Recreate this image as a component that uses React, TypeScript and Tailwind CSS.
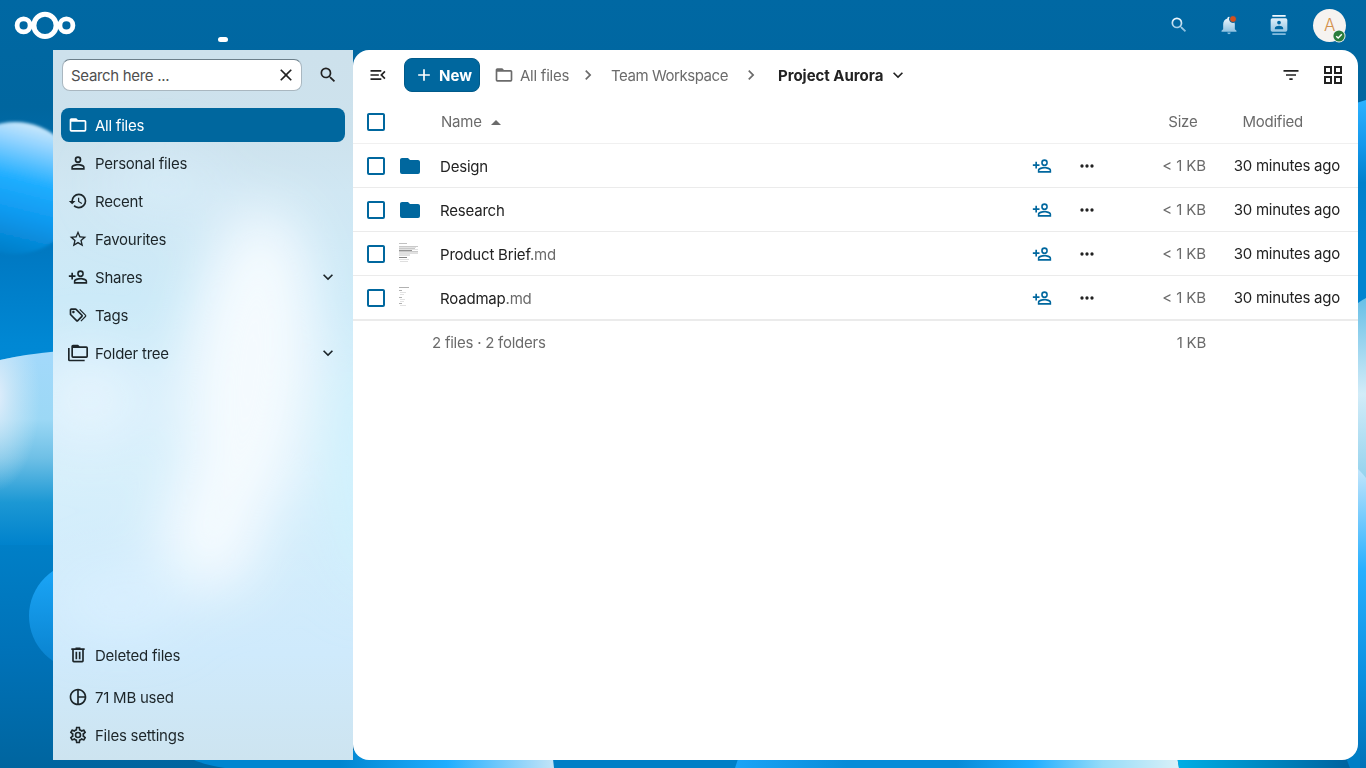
import React from "react";

const P = {
  magnify: "M9.5,3A6.5,6.5 0 0,1 16,9.5C16,11.11 15.41,12.59 14.44,13.73L14.71,14H15.5L20.5,19L19,20.5L14,15.5V14.71L13.73,14.44C12.59,15.41 11.11,16 9.5,16A6.5,6.5 0 0,1 3,9.5A6.5,6.5 0 0,1 9.5,3M9.5,5C7,5 5,7 5,9.5C5,12 7,14 9.5,14C12,14 14,12 14,9.5C14,7 12,5 9.5,5Z",
  close: "M19,6.41L17.59,5L12,10.59L6.41,5L5,6.41L10.59,12L5,17.59L6.41,19L12,13.41L17.59,19L19,17.59L13.41,12L19,6.41Z",
  folderOutline: "M20,18H4V8H20M20,6H12L10,4H4C2.89,4 2,4.89 2,6V18A2,2 0 0,0 4,20H20A2,2 0 0,0 22,18V8C22,6.89 21.1,6 20,6Z",
  folder: "M10,4H4C2.89,4 2,4.89 2,6V18A2,2 0 0,0 4,20H20A2,2 0 0,0 22,18V8C22,6.89 21.1,6 20,6H12L10,4Z",
  account: "M12,4A4,4 0 0,1 16,8A4,4 0 0,1 12,12A4,4 0 0,1 8,8A4,4 0 0,1 12,4M12,6A2,2 0 0,0 10,8A2,2 0 0,0 12,10A2,2 0 0,0 14,8A2,2 0 0,0 12,6M12,13C14.67,13 20,14.33 20,17V20H4V17C4,14.33 9.33,13 12,13M12,14.9C9.03,14.9 5.9,16.36 5.9,17V18.1H18.1V17C18.1,16.36 14.97,14.9 12,14.9Z",
  history: "M13.5,8H12V13L16.28,15.54L17,14.33L13.5,12.25V8M13,3A9,9 0 0,0 4,12H1L4.96,16.03L9,12H6A7,7 0 0,1 13,5A7,7 0 0,1 20,12A7,7 0 0,1 13,19C11.07,19 9.32,18.21 8.06,16.94L6.64,18.36C8.27,20 10.5,21 13,21A9,9 0 0,0 22,12A9,9 0 0,0 13,3",
  star: "M12,15.39L8.24,17.66L9.23,13.38L5.91,10.5L10.29,10.13L12,6.09L13.71,10.13L18.09,10.5L14.77,13.38L15.76,17.66M22,9.24L14.81,8.63L12,2L9.19,8.63L2,9.24L7.45,13.97L5.82,21L12,17.27L18.18,21L16.54,13.97L22,9.24Z",
  accountPlus: "M15,4A4,4 0 0,0 11,8A4,4 0 0,0 15,12A4,4 0 0,0 19,8A4,4 0 0,0 15,4M15,5.9C16.16,5.9 17.1,6.84 17.1,8C17.1,9.16 16.16,10.1 15,10.1A2.1,2.1 0 0,1 12.9,8A2.1,2.1 0 0,1 15,5.9M4,7V10H1V12H4V15H6V12H9V10H6V7H4M15,13C12.33,13 7,14.33 7,17V20H23V17C23,14.33 17.67,13 15,13M15,14.9C17.97,14.9 21.1,16.36 21.1,17V18.1H8.9V17C8.9,16.36 12,14.9 15,14.9Z",
  tags: "M6.5 10C7.3 10 8 9.3 8 8.5S7.3 7 6.5 7 5 7.7 5 8.5 5.7 10 6.5 10M9 6L16 13L11 18L4 11V6H9M9 4H4C2.9 4 2 4.9 2 6V11C2 11.6 2.2 12.1 2.6 12.4L9.6 19.4C9.9 19.8 10.4 20 11 20S12.1 19.8 12.4 19.4L17.4 14.4C17.8 14 18 13.5 18 13C18 12.4 17.8 11.9 17.4 11.6L10.4 4.6C10.1 4.2 9.6 4 9 4M13.5 5.7L14.5 4.7L21.4 11.6C21.8 12 22 12.5 22 13S21.8 14.1 21.4 14.4L16 19.8L15 18.8L20.7 13L13.5 5.7Z",
  folderMultiple: "M22 4H14L12 2H6A2 2 0 0 0 4 4V16A2 2 0 0 0 6 18H22A2 2 0 0 0 24 16V6A2 2 0 0 0 22 4M22 16H6V6H22V16M2 6H0V20A2 2 0 0 0 2 22H20V20H2Z",
  chevronDown: "M7.41,8.58L12,13.17L16.59,8.58L18,10L12,16L6,10L7.41,8.58Z",
  chevronRight: "M8.59,16.58L13.17,12L8.59,7.41L10,6L16,12L10,18L8.59,16.58Z",
  trash: "M9,3V4H4V6H5V19A2,2 0 0,0 7,21H17A2,2 0 0,0 19,19V6H20V4H15V3H9M7,6H17V19H7V6M9,8V17H11V8H9M13,8V17H15V8H13Z",
  pie: "M12 2C6.5 2 2 6.5 2 12S6.5 22 12 22 22 17.5 22 12 17.5 2 12 2M13 4.1C16.6 4.5 19.5 7.4 19.9 11H13V4.1M4 12C4 7.9 7.1 4.6 11 4.1V19.9C7.1 19.4 4 16.1 4 12M13 19.9V13H19.9C19.5 16.6 16.6 19.5 13 19.9Z",
  cog: "M12,8A4,4 0 0,1 16,12A4,4 0 0,1 12,16A4,4 0 0,1 8,12A4,4 0 0,1 12,8M12,10A2,2 0 0,0 10,12A2,2 0 0,0 12,14A2,2 0 0,0 14,12A2,2 0 0,0 12,10M10,22C9.75,22 9.54,21.82 9.5,21.58L9.13,18.93C8.5,18.68 7.96,18.34 7.44,17.94L4.95,18.95C4.73,19.03 4.46,18.95 4.34,18.73L2.34,15.27C2.21,15.05 2.27,14.78 2.46,14.63L4.57,12.97L4.5,12L4.57,11L2.46,9.37C2.27,9.22 2.21,8.95 2.34,8.73L4.34,5.27C4.46,5.05 4.73,4.96 4.95,5.05L7.44,6.05C7.96,5.66 8.5,5.32 9.13,5.07L9.5,2.42C9.54,2.18 9.75,2 10,2H14C14.25,2 14.46,2.18 14.5,2.42L14.87,5.07C15.5,5.32 16.04,5.66 16.56,6.05L19.05,5.05C19.27,4.96 19.54,5.05 19.66,5.27L21.66,8.73C21.79,8.95 21.73,9.22 21.54,9.37L19.43,11L19.5,12L19.43,13L21.54,14.63C21.73,14.78 21.79,15.05 21.66,15.27L19.66,18.73C19.54,18.95 19.27,19.04 19.05,18.95L16.56,17.95C16.04,18.34 15.5,18.68 14.87,18.93L14.5,21.58C14.46,21.82 14.25,22 14,22H10M11.25,4L10.88,6.61C9.68,6.86 8.62,7.5 7.85,8.39L5.44,7.35L4.69,8.65L6.8,10.2C6.4,11.37 6.4,12.64 6.8,13.8L4.68,15.36L5.43,16.66L7.86,15.62C8.63,16.5 9.68,17.14 10.87,17.38L11.24,20H12.76L13.13,17.39C14.32,17.14 15.37,16.5 16.14,15.62L18.57,16.66L19.32,15.36L17.2,13.81C17.6,12.64 17.6,11.37 17.2,10.2L19.31,8.65L18.56,7.35L16.15,8.39C15.38,7.5 14.32,6.86 13.12,6.62L12.75,4H11.25Z",
  menuOpen: "M21,15.61L19.59,17L14.58,12L19.59,7L21,8.39L17.44,12L21,15.61M3,6H16V8H3V6M3,13V11H13V13H3M3,18V16H16V18H3Z",
  plus: "M19,13H13V19H11V13H5V11H11V5H13V11H19V13Z",
  menuUp: "M7,15L12,10L17,15H7Z",
  filter: "M6,13H18V11H6M3,6V8H21V6M10,18H14V16H10V18Z",
  grid: "M3 11H11V3H3M5 5H9V9H5M13 21H21V13H13M15 15H19V19H15M3 21H11V13H3M5 15H9V19H5M13 3V11H21V3M19 9H15V5H19Z",
  dots: "M16,12A2,2 0 0,1 18,10A2,2 0 0,1 20,12A2,2 0 0,1 18,14A2,2 0 0,1 16,12M10,12A2,2 0 0,1 12,10A2,2 0 0,1 14,12A2,2 0 0,1 12,14A2,2 0 0,1 10,12M4,12A2,2 0 0,1 6,10A2,2 0 0,1 8,12A2,2 0 0,1 6,14A2,2 0 0,1 4,12Z",
  checkbox: "M19,3H5C3.89,3 3,3.89 3,5V19A2,2 0 0,0 5,21H19A2,2 0 0,0 21,19V5C21,3.89 20.1,3 19,3M19,5V19H5V5H19Z",
  bell: "M21,19V20H3V19L5,17V11C5,7.9 7.03,5.17 10,4.29C10,4.19 10,4.1 10,4A2,2 0 0,1 12,2A2,2 0 0,1 14,4C14,4.1 14,4.19 14,4.29C16.97,5.17 19,7.9 19,11V17L21,19M14,21A2,2 0 0,1 12,23A2,2 0 0,1 10,21",
  contacts: "M20,0H4V2H20V0M4,24H20V22H4V24M20,4H4A2,2 0 0,0 2,6V18A2,2 0 0,0 4,20H20A2,2 0 0,0 22,18V6A2,2 0 0,0 20,4M12,6.75A2.25,2.25 0 0,1 14.25,9A2.25,2.25 0 0,1 12,11.25A2.25,2.25 0 0,1 9.75,9A2.25,2.25 0 0,1 12,6.75M17,17H7V15.5C7,13.83 10.33,13 12,13C13.67,13 17,13.83 17,15.5V17Z",
};

function Icon({ d, size = 20, className = "", fill = "currentColor" }: { d: string; size?: number; className?: string; fill?: string }) {
  return (
    <svg width={size} height={size} viewBox="0 0 24 24" fill={fill} className={`shrink-0 ${className}`}>
      <path d={d} />
    </svg>
  );
}

function Wallpaper() {
  return (
    <svg className="absolute inset-0 -z-10" width="1366" height="768" viewBox="0 0 1366 768">
      <defs>
        <linearGradient id="base" x1="0" y1="0" x2="0" y2="1">
          <stop offset="0" stopColor="#0068a3" />
          <stop offset="0.14" stopColor="#00669f" />
          <stop offset="0.34" stopColor="#007ac4" />
          <stop offset="0.45" stopColor="#0088d4" />
          <stop offset="0.7" stopColor="#0080c8" />
          <stop offset="0.85" stopColor="#0072b8" />
          <stop offset="1" stopColor="#00659f" />
        </linearGradient>
        <linearGradient id="b1" x1="0.75" y1="0.02" x2="0.5" y2="1">
          <stop offset="0" stopColor="#d2ebfb" />
          <stop offset="0.18" stopColor="#8fd2ff" />
          <stop offset="0.45" stopColor="#20aeff" />
          <stop offset="0.7" stopColor="#0f9af0" />
          <stop offset="1" stopColor="#007fca" />
        </linearGradient>
        <linearGradient id="b2" x1="0" y1="0" x2="0" y2="1">
          <stop offset="0" stopColor="#a3d9fb" />
          <stop offset="0.35" stopColor="#9cd8f5" />
          <stop offset="0.55" stopColor="#6fc0e6" />
          <stop offset="0.78" stopColor="#1c98d4" />
          <stop offset="1" stopColor="#0082cc" />
        </linearGradient>
        <radialGradient id="b2glow" gradientUnits="userSpaceOnUse" cx="0" cy="0" r="1" gradientTransform="translate(-6 396) scale(46 96)">
          <stop offset="0" stopColor="#e6effc" />
          <stop offset="0.4" stopColor="#dcecf8" stopOpacity="0.6" />
          <stop offset="1" stopColor="#cfe8f6" stopOpacity="0" />
        </radialGradient>
        <linearGradient id="b3" x1="0" y1="0" x2="0" y2="1">
          <stop offset="0" stopColor="#1ca8fa" />
          <stop offset="1" stopColor="#0880cc" />
        </linearGradient>
        <linearGradient id="r1" x1="0" y1="0" x2="0" y2="1">
          <stop offset="0" stopColor="#2cb2ff" />
          <stop offset="0.3" stopColor="#1498ec" />
          <stop offset="0.55" stopColor="#0080cc" />
          <stop offset="1" stopColor="#0084d0" />
        </linearGradient>
        <linearGradient id="r2" x1="0" y1="0" x2="0" y2="1">
          <stop offset="0" stopColor="#68bfe6" />
          <stop offset="0.5" stopColor="#d2ecf8" />
          <stop offset="1" stopColor="#8ccfec" />
        </linearGradient>
        <linearGradient id="r3" x1="0" y1="0" x2="0" y2="1">
          <stop offset="0" stopColor="#cce9fb" />
          <stop offset="0.35" stopColor="#28b0ff" />
          <stop offset="0.7" stopColor="#0b90e0" />
          <stop offset="1" stopColor="#0072b8" />
        </linearGradient>
        <linearGradient id="s1" gradientUnits="userSpaceOnUse" x1="340" y1="0" x2="554" y2="0">
          <stop offset="0" stopColor="#0086d0" />
          <stop offset="0.5" stopColor="#20aeff" />
          <stop offset="1" stopColor="#c3e4f7" />
        </linearGradient>
        <linearGradient id="s2" gradientUnits="userSpaceOnUse" x1="736" y1="0" x2="1178" y2="0">
          <stop offset="0" stopColor="#1aa4f7" />
          <stop offset="0.25" stopColor="#078cd8" />
          <stop offset="0.5" stopColor="#078cd8" />
          <stop offset="0.67" stopColor="#20aeff" />
          <stop offset="0.83" stopColor="#96dcf8" />
          <stop offset="1" stopColor="#d8f0f8" />
        </linearGradient>
        <linearGradient id="s3" gradientUnits="userSpaceOnUse" x1="1178" y1="0" x2="1346" y2="0">
          <stop offset="0" stopColor="#00aee4" />
          <stop offset="1" stopColor="#0064a0" />
        </linearGradient>
        <linearGradient id="side" x1="0" y1="0" x2="0" y2="1">
          <stop offset="0" stopColor="#cde1ec" />
          <stop offset="0.12" stopColor="#cde2ed" />
          <stop offset="0.2" stopColor="#d0e7f3" />
          <stop offset="0.35" stopColor="#cceaf8" />
          <stop offset="0.6" stopColor="#d6effb" />
          <stop offset="0.85" stopColor="#cfeafc" />
          <stop offset="1" stopColor="#cde4f0" />
        </linearGradient>
        <filter id="soft1" x="-20%" y="-20%" width="140%" height="140%"><feGaussianBlur stdDeviation="1.5" /></filter>
        <filter id="soft" x="-80%" y="-80%" width="260%" height="260%"><feGaussianBlur stdDeviation="28" /></filter>
        <clipPath id="sideClip"><rect x="53" y="50" width="300" height="710" /></clipPath>
      </defs>
      <rect width="1366" height="768" fill="url(#base)" />
      <circle cx="15" cy="188" r="66" fill="url(#b1)" filter="url(#soft1)" />
      <path d="M0 360Q26 354 60 351V545H0Z" fill="url(#b2)" />
      <path d="M0 360Q26 354 60 351V545H0Z" fill="url(#b2glow)" />
      <circle cx="83" cy="616" r="54" fill="url(#b3)" />
      <path d="M1350 106Q1358 102 1366 100V250H1350Z" fill="url(#r1)" />
      <rect x="1350" y="240" width="16" height="100" fill="#0084d0" />
      <path d="M1350 310Q1358 302 1366 298V490H1350Z" fill="url(#r2)" />
      <path d="M1350 462Q1360 470 1366 478V768H1350Z" fill="url(#r3)" />
      <rect x="360" y="750" width="1000" height="18" fill="#007fc6" />
      <path d="M190 758Q200 764 225 768H554L552 750H350V758Z" fill="url(#s1)" />
      <path d="M735 768L741 750H1176L1179 768Z" fill="url(#s2)" />
      <path d="M1176 750H1343L1350 768H1179Z" fill="url(#s3)" />
      <g clipPath="url(#sideClip)">
        <rect x="53" y="50" width="300" height="710" fill="url(#side)" />
        <g filter="url(#soft)">
          <ellipse cx="165" cy="185" rx="60" ry="22" fill="#dcf0fc" opacity="0.8" />
          <ellipse cx="90" cy="400" rx="60" ry="50" fill="#e8f5fe" opacity="0.8" />
          <ellipse cx="250" cy="370" rx="66" ry="165" transform="rotate(6 250 370)" fill="#f4fafe" />
          <ellipse cx="212" cy="530" rx="50" ry="62" fill="#f4fafe" />
          <ellipse cx="120" cy="600" rx="60" ry="30" fill="#daf0fe" />
          <ellipse cx="370" cy="470" rx="34" ry="120" fill="#cff2fd" />
        </g>
      </g>
    </svg>
  );
}

function NavItem({ icon, label, active, chevron, gap }: { icon: string; label: string; active?: boolean; chevron?: boolean; gap?: string }) {
  return (
    <div className={`flex h-[34px] items-center rounded-lg pl-[7px] pr-[7px] ${active ? "bg-[#00679e] text-white" : "text-[#1c2529]"} ${gap ?? "mb-1"}`}>
      <Icon d={icon} />
      <span className="ml-[7px] flex-1 pt-0.5">{label}</span>
      {chevron && <Icon d={P.chevronDown} />}
    </div>
  );
}

const files = [
  { name: "Design", ext: "", kind: "folder" },
  { name: "Research", ext: "", kind: "folder" },
  { name: "Product Brief", ext: ".md", kind: "brief" },
  { name: "Roadmap", ext: ".md", kind: "roadmap" },
];

function BriefPreview() {
  return (
    <svg width="24" height="24" viewBox="0 0 24 24" className="shrink-0">
      <g stroke="#666" strokeWidth="1">
        <path d="M1 1.5H9" opacity="0.4" />
        <path d="M1 4.5H20M1 6.5H17M1 9.5H20" opacity="0.35" />
        <path d="M1 8.5H14" opacity="0.7" />
        <path d="M1 7.5H20M1 5.5H18M1 10.5H20M1 12.5H12" opacity="0.18" />
        <path d="M1 11.5H20M1 13.5H12" opacity="0.2" />
        <path d="M1 15.5H9" opacity="0.8" />
        <path d="M1 17.5H11M2 19.5H10" opacity="0.2" />
      </g>
    </svg>
  );
}

function RoadmapPreview() {
  return (
    <svg width="24" height="24" viewBox="0 0 24 24" className="shrink-0">
      <g stroke="#666" strokeWidth="1">
        <path d="M1 1.5H11" opacity="0.5" />
        <path d="M1 4.5H4M1 11.5H4M1 17.5H4" opacity="0.5" />
        <path d="M2 6.5H8M2 8.5H6M2 13.5H7M2 15.5H6M2 19.5H8" opacity="0.18" />
      </g>
    </svg>
  );
}

function FileRow({ file }: { file: (typeof files)[number] }) {
  return (
    <div className="flex h-11 items-center border-b border-[#ebebeb] pl-[11px] pr-[18px]">
      <Icon d={P.checkbox} size={24} className="text-[#00679e]" />
      <div className="ml-[10px] w-6">
        {file.kind === "folder" && <Icon d={P.folder} size={24} className="text-[#00679e]" />}
        {file.kind === "brief" && <BriefPreview />}
        {file.kind === "roadmap" && <RoadmapPreview />}
      </div>
      <div className="ml-[18px] flex-1 pt-0.5 tracking-[-0.2px] text-[#222]">
        {file.name}
        <span className="text-[#6b6b6b]">{file.ext}</span>
      </div>
      <Icon d={P.accountPlus} className="text-[#00679e]" />
      <Icon d={P.dots} className="ml-[25px] text-[#222]" />
      <div className="ml-[45px] w-[64px] text-right tracking-[-0.1px] text-[#6b6b6b]">{"< 1 KB"}</div>
      <div className="w-[134px] text-right tracking-[-0.25px] text-[#222]">30 minutes ago</div>
    </div>
  );
}

export default function App() {
  return (
    <div className="relative isolate h-[768px] w-[1366px] overflow-hidden font-['Inter',sans-serif] text-[15px] leading-6 tracking-[-0.24px]">
      <Wallpaper />
      <header className="flex h-[50px] items-center pl-[14px] pr-[20px]">
        <svg width="62" height="28" viewBox="0 0 62 28" fill="none" stroke="#fff">
          <circle cx="31" cy="14.4" r="11.1" strokeWidth="5" />
          <circle cx="9.6" cy="14.4" r="6.5" strokeWidth="4.8" />
          <circle cx="52.4" cy="14.4" r="6.5" strokeWidth="4.8" />
        </svg>
        <div className="ml-[142px] mt-[29px] h-[5px] w-[10px] rounded-full bg-white" />
        <div className="flex-1" />
        <svg width="0" height="0" className="absolute">
          <linearGradient id="hdr" x1="0" y1="0" x2="0" y2="1">
            <stop offset="0" stopColor="#f4faff" />
            <stop offset="1" stopColor="#7fb9dc" />
          </linearGradient>
        </svg>
        <Icon d={P.magnify} fill="url(#hdr)" className="mr-[30px]" />
        <div className="relative mr-[30px]">
          <Icon d={P.bell} fill="url(#hdr)" />
          <div className="absolute left-[10px] top-0 size-[8px] rounded-full border border-[#0068a3] bg-[#d4501c]" />
        </div>
        <Icon d={P.contacts} fill="url(#hdr)" className="mr-[24px]" />
        <div className="relative flex size-[33px] items-center justify-center rounded-full bg-[#f6f3f0] text-[17px] font-light text-[#d3904b]">
          A
          <svg className="absolute left-[19px] top-[20px]" width="14" height="14" viewBox="0 0 14 14">
            <circle cx="7" cy="7" r="6.5" fill="#f4f4f4" />
            <circle cx="7" cy="7" r="5.6" fill="#2a7d3c" />
            <path d="M4.2 7.2L6.2 9.1L9.8 5.3" fill="none" stroke="#fff" strokeWidth="1.4" />
          </svg>
        </div>
      </header>
      <div className="flex h-[710px] pl-[53px] pr-2">
        <nav className="flex w-[300px] flex-col px-2">
          <div className="ml-[1px] mt-[9px] flex h-[32px] items-center">
            <div className="flex h-[32px] w-[240px] items-center rounded-lg border border-[#a9b7c0] border-t-[#6c7f8a] bg-white pl-2 pr-[5px] text-[#4f4f4f]">
              <span className="flex-1 pt-0.5 tracking-[-0.32px]">Search here ...</span>
              <Icon d={P.close} className="text-[#222]" />
            </div>
            <Icon d={P.magnify} className="ml-4 text-[#222]" />
          </div>
          <div className="mt-[17px] flex flex-1 flex-col">
            <NavItem icon={P.folderOutline} label="All files" active />
            <NavItem icon={P.account} label="Personal files" />
            <NavItem icon={P.history} label="Recent" />
            <NavItem icon={P.star} label="Favourites" />
            <NavItem icon={P.accountPlus} label="Shares" chevron />
            <NavItem icon={P.tags} label="Tags" />
            <NavItem icon={P.folderMultiple} label="Folder tree" chevron />
          </div>
          <div className="pb-[4px]">
            <NavItem icon={P.trash} label="Deleted files" gap="mb-2" />
            <NavItem icon={P.pie} label="71 MB used" />
            <NavItem icon={P.cog} label="Files settings" />
          </div>
        </nav>
        <main className="flex flex-1 flex-col rounded-2xl bg-white">
          <div className="flex h-[50px] items-center pl-[15px] pr-[15px] text-[#6b6b6b]">
            <Icon d={P.menuOpen} className="text-[#222]" />
            <button className="ml-4 flex h-[34px] w-[76px] items-center rounded-lg border border-[#005a8a] bg-[#00679e] pl-[9px] font-bold tracking-normal text-white">
              <Icon d={P.plus} />
              <span className="ml-[5px] pt-0.5">New</span>
            </button>
            <Icon d={P.folderOutline} className="ml-[14px]" />
            <span className="ml-[6px] w-[49px] whitespace-nowrap pt-0.5">All files</span>
            <Icon d={P.chevronRight} className="ml-[9px]" />
            <span className="ml-[13px] w-[117px] whitespace-nowrap pt-0.5 tracking-[-0.45px]">Team Workspace</span>
            <Icon d={P.chevronRight} className="ml-[13px]" />
            <span className="ml-[17px] w-[105px] whitespace-nowrap pt-0.5 font-bold tracking-[-0.02px] text-[#222]">Project Aurora</span>
            <Icon d={P.chevronDown} className="ml-[5px] text-[#222]" />
            <div className="flex-1" />
            <Icon d={P.filter} className="text-[#222]" />
            <Icon d={P.grid} size={24} className="-mr-0.5 ml-5 text-[#222]" />
          </div>
          <div className="flex h-11 items-center border-b border-[#f0f0f0] pl-[11px] text-[#6b6b6b]">
            <Icon d={P.checkbox} size={24} className="text-[#00679e]" />
            <span className="ml-[53px] w-[40px]">Name</span>
            <Icon d={P.menuUp} className="ml-[3px]" size={24} />
            <div className="flex-1" />
            <span className="mr-[45px]">Size</span>
            <span className="mr-[55px]">Modified</span>
          </div>
          {files.map((f) => (
            <FileRow key={f.name} file={f} />
          ))}
          <div className="flex h-11 items-center border-t border-[#ebebeb] pl-[79px] text-[#6b6b6b]">
            <span className="flex-1">2 files · 2 folders</span>
            <span className="mr-[152px]">1 KB</span>
          </div>
        </main>
      </div>
    </div>
  );
}
